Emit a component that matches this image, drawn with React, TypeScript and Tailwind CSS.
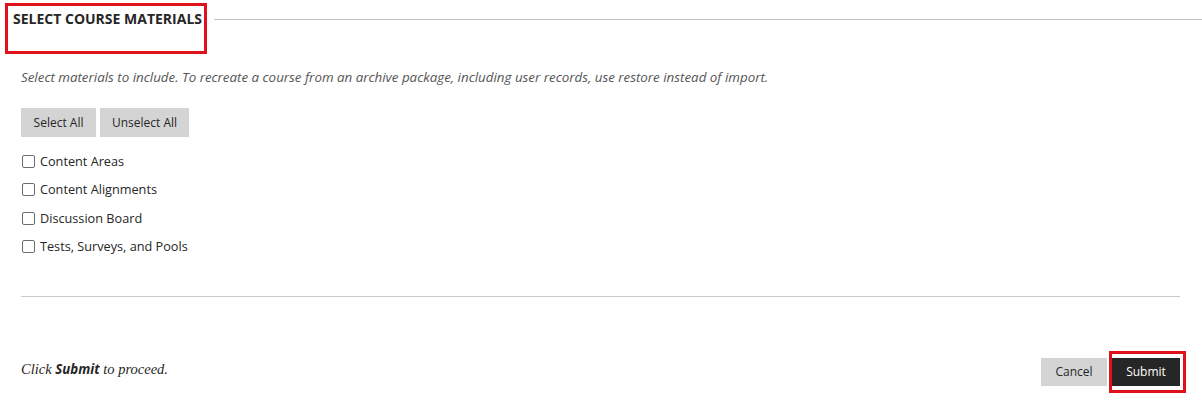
import React from 'react';

const items = ['Content Areas', 'Content Alignments', 'Discussion Board', 'Tests, Surveys, and Pools'];

export default function App() {
  return (
    <div className="relative w-[1202px] h-[405px] bg-white font-['Open_Sans',sans-serif] text-[#262626]">
      {/* header */}
      <div className="flex items-center pt-[11px] pl-[13px]">
        <h2 className="text-[14px] leading-[16px] font-bold text-[#262626]">SELECT COURSE MATERIALS</h2>
        <div className="flex-1 h-px bg-[#c4c4c4] ml-[12px] mt-[1px]" />
      </div>
      <div className="absolute left-[5px] top-[3px] w-[202px] h-[51px] border-[3px] border-[#e1111b]" />

      <p className="mt-[41px] pl-[21px] text-[13.35px] leading-[18px] italic text-[#555]">
        Select materials to include. To recreate a course from an archive package, including user records, use restore instead of import.
      </p>

      <div className="flex gap-[4px] pl-[21px] mt-[22px]">
        <button className="h-[29px] w-[75px] bg-[#d4d4d4] text-[12px] text-[#262626]">Select All</button>
        <button className="h-[29px] w-[89px] bg-[#d4d4d4] text-[12px] text-[#262626]">Unselect All</button>
      </div>

      <ul className="mt-[10px] pl-[22px]">
        {items.map((t) => (
          <li key={t} className="flex items-center h-[28.5px]">
            <span className="w-[13px] h-[13px] border border-[#6d6d6d] rounded-[2px] bg-white" />
            <span className="ml-[5px] text-[12.7px] text-[#262626]">{t}</span>
          </li>
        ))}
      </ul>

      <div className="ml-[21px] w-[1159px] h-px bg-[#c9c9c9] mt-[35px]" />

      <div className="flex items-center justify-between pl-[21px] pr-[22px] mt-[61px]">
        <p className="pb-[5px] font-['Liberation_Serif',serif] italic text-[14.5px] text-[#262626]">
          Click <b className="font-['Open_Sans',sans-serif] font-bold text-[13.3px]">Submit</b> to proceed.
        </p>
        <div className="flex gap-[5px]">
          <button className="h-[28px] w-[66px] bg-[#d4d4d4] text-[12px] text-[#262626]">Cancel</button>
          <button className="h-[28px] w-[68px] bg-[#262626] text-[12px] text-white">Submit</button>
        </div>
      </div>
      <div className="absolute left-[1109px] top-[351px] w-[77px] h-[42px] border-[3px] border-[#e1111b]" />
    </div>
  );
}
